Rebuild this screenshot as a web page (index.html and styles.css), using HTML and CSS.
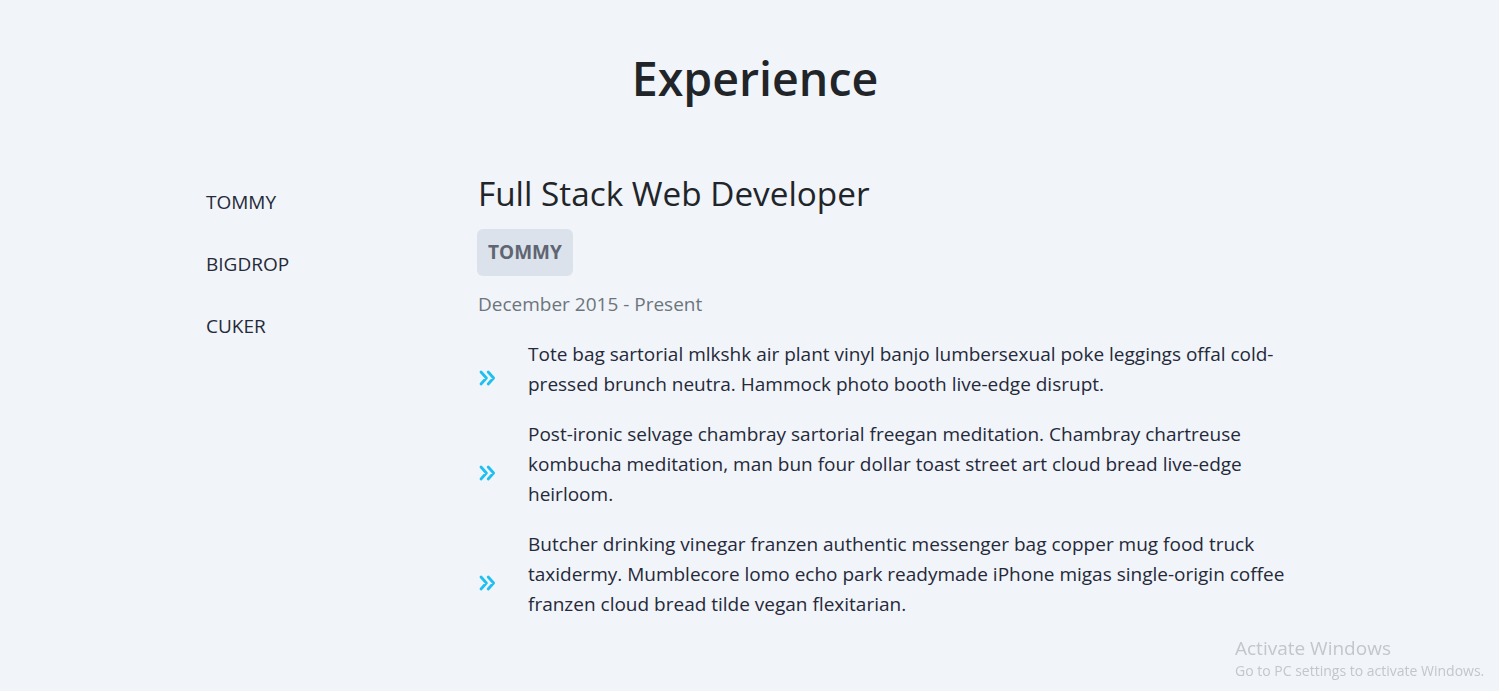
FILE: index.html
```html
<!DOCTYPE html>
<html lang="en">
<head>
<meta charset="utf-8">
<title>Experience</title>
<link rel="stylesheet" href="styles.css">
</head>
<body>
<section class="experience">
  <h2 class="section-title">Experience</h2>
  <div class="exp-body">
    <ul class="tabs">
      <li class="tab">TOMMY</li>
      <li class="tab">BIGDROP</li>
      <li class="tab">CUKER</li>
    </ul>
    <div class="job">
      <h3 class="job-title">Full Stack Web Developer</h3>
      <span class="company">TOMMY</span>
      <p class="dates">December 2015 - Present</p>
      <ul class="duties">
        <li class="duty">
          <svg class="chev" viewBox="0 0 17 16" aria-hidden="true"><path d="M2 2 L7.4 8 L2 14 M9.2 2 L14.6 8 L9.2 14" fill="none" stroke="currentColor" stroke-width="2.8" stroke-linecap="round" stroke-linejoin="round"/></svg>
          <p>Tote bag sartorial mlkshk air plant vinyl banjo lumbersexual poke leggings offal cold-pressed brunch neutra. Hammock photo booth live-edge disrupt.</p>
        </li>
        <li class="duty">
          <svg class="chev" viewBox="0 0 17 16" aria-hidden="true"><path d="M2 2 L7.4 8 L2 14 M9.2 2 L14.6 8 L9.2 14" fill="none" stroke="currentColor" stroke-width="2.8" stroke-linecap="round" stroke-linejoin="round"/></svg>
          <p>Post-ironic selvage chambray sartorial freegan meditation. Chambray chartreuse kombucha meditation, man bun four dollar toast street art cloud bread live-edge heirloom.</p>
        </li>
        <li class="duty">
          <svg class="chev" viewBox="0 0 17 16" aria-hidden="true"><path d="M2 2 L7.4 8 L2 14 M9.2 2 L14.6 8 L9.2 14" fill="none" stroke="currentColor" stroke-width="2.8" stroke-linecap="round" stroke-linejoin="round"/></svg>
          <p>Butcher drinking vinegar franzen authentic messenger bag copper mug food truck taxidermy. Mumblecore lomo echo park readymade iPhone migas single-origin coffee franzen cloud bread tilde vegan flexitarian.</p>
        </li>
      </ul>
    </div>
  </div>
</section>
<div class="watermark">
  <div class="wm-title">Activate Windows</div>
  <div class="wm-sub">Go to PC settings to activate Windows.</div>
</div>
</body>
</html>
```

FILE: styles.css
```css
* { box-sizing: border-box; }
html, body { height: 100%; }
body {
  margin: 0;
  background: #f1f4f8;
  color: #212529;
  font-family: "Open Sans", "Noto Sans", sans-serif;
  font-size: 19px;
  line-height: 1.5;
  overflow: hidden;
}
.experience {
  padding-top: 45px;
}
.section-title {
  margin: 0;
  padding-left: 11px;
  text-align: center;
  font-size: 46.5px;
  font-weight: 600;
  line-height: 66px;
  color: #212529;
}
.exp-body {
  display: flex;
  width: 1110px;
  margin: 61px auto 0 195px;
}
.tabs {
  list-style: none;
  margin: 0;
  padding: 15px 0 0 11px;
  width: 283px;
  flex: none;
}
.tab {
  line-height: 30px;
  margin-bottom: 32px;
  color: #252a3a;
}
.job {
  flex: 1;
  min-width: 0;
}
.job-title {
  margin: 0;
  font-size: 33.3px;
  font-weight: 400;
  line-height: 42px;
  color: #212529;
}
.company {
  display: inline-block;
  margin: 15px 0 0 -1px;
  padding: 8px 11px 9px;
  background: #dbe2eb;
  border-radius: 6px;
  color: #5f6571;
  font-weight: 700;
  line-height: 30px;
}
.dates {
  margin: 13px 0 0;
  color: #6c757d;
  line-height: 30px;
}
.duties {
  list-style: none;
  margin: 20px 0 0;
  padding: 0;
}
.duty {
  display: flex;
  align-items: center;
  margin-bottom: 20px;
}
.chev {
  flex: none;
  width: 17px;
  height: 16px;
  margin: 17px 32px 0 1px;
  color: #1fbff0;
}
.duty p {
  margin: 0;
  line-height: 30px;
  color: #25293a;
}
.watermark {
  position: fixed;
  left: 1235px;
  top: 634px;
  color: #c3c6ca;
}
.wm-title {
  font-size: 19px;
  line-height: 28px;
}
.wm-sub {
  font-size: 14px;
  line-height: 18px;
}
```
